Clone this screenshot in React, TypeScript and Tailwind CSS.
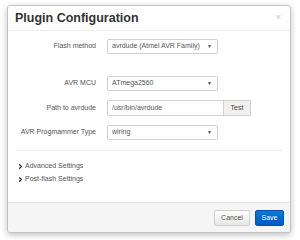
import { ChevronRight } from "lucide-react";

function Select({ value, width }: { value: string; width: string }) {
  return (
    <div
      className={`flex h-[15px] items-center justify-between rounded-[2px] border border-[#cfcfcf] bg-white pl-[4px] pr-[5px] text-[#555] ${width}`}
    >
      <span>{value}</span>
      <span className="text-[5px] text-[#444]">▼</span>
    </div>
  );
}

function Row({ label, children }: { label: string; children: React.ReactNode }) {
  return (
    <div className="flex items-center">
      <div className="w-[80px] text-right text-[#555]">{label}</div>
      <div className="ml-[11px]">{children}</div>
    </div>
  );
}

export default function App() {
  return (
    <div
      className="h-[240px] w-[300px] overflow-hidden bg-white pl-[7px] pt-[5px] text-[7px]"
      style={{ fontFamily: '"Liberation Sans", Arial, sans-serif' }}
    >
      <div className="flex h-[228px] w-[284px] flex-col overflow-hidden rounded-[3px] border border-[#c4c4c4] bg-white shadow-[0_2px_6px_rgba(0,0,0,0.25)]">
        <div className="flex h-[25px] shrink-0 items-center justify-between border-b border-[#eeeeee] px-[7px]">
          <h1 className="text-[12.5px] font-bold text-[#333]">Plugin Configuration</h1>
          <span className="mr-[2px] text-[9px] text-[#c8c8c8]">×</span>
        </div>

        <div className="flex flex-1 flex-col px-[8px] pt-[8px]">
          <Row label="Flash method">
            <Select value="avrdude (Atmel AVR Family)" width="w-[111px]" />
          </Row>
          <div className="mt-[22px] flex flex-col gap-[9px]">
            <Row label="AVR MCU">
              <Select value="ATmega2560" width="w-[111px]" />
            </Row>
            <Row label="Path to avrdude">
              <div className="flex h-[16px]">
                <div className="flex w-[117px] items-center rounded-l-[2px] border border-[#cfcfcf] pl-[4px] text-[#555]">
                  /usr/bin/avrdude
                </div>
                <div className="flex w-[27px] items-center justify-center rounded-r-[2px] border border-l-0 border-[#cfcfcf] bg-[#f0f0f0] text-[#444]">
                  Test
                </div>
              </div>
            </Row>
            <Row label="AVR Progmammer Type">
              <Select value="wiring" width="w-[111px]" />
            </Row>
          </div>

          <div className="mr-[-1px] mt-[10px] border-t border-[#eeeeee]" />

          <div className="mt-[9px] flex flex-col gap-[1px] leading-[12px] text-[#555]">
            <div className="flex items-center">
              <ChevronRight className="ml-[1px] h-[7px] w-[7px] text-[#333]" strokeWidth={4.5} />
              <span className="ml-[1px]">Advanced Settings</span>
            </div>
            <div className="flex items-center">
              <ChevronRight className="ml-[1px] h-[7px] w-[7px] text-[#333]" strokeWidth={4.5} />
              <span className="ml-[1px]">Post-flash Settings</span>
            </div>
          </div>
        </div>

        <div className="flex h-[30px] shrink-0 items-start justify-end gap-[5px] border-t border-[#e5e5e5] bg-[#f5f5f5] pr-[6px] pt-[7px]">
          <button className="flex h-[16px] w-[36px] items-center justify-center rounded-[2px] border border-[#d0d0d0] bg-gradient-to-b from-white to-[#e6e6e6] text-[#555]">
            Cancel
          </button>
          <button className="flex h-[16px] w-[29px] items-center justify-center rounded-[2px] border border-[#0055b3] bg-gradient-to-b from-[#0a7ad6] to-[#0058c4] text-white">
            Save
          </button>
        </div>
      </div>
    </div>
  );
}
